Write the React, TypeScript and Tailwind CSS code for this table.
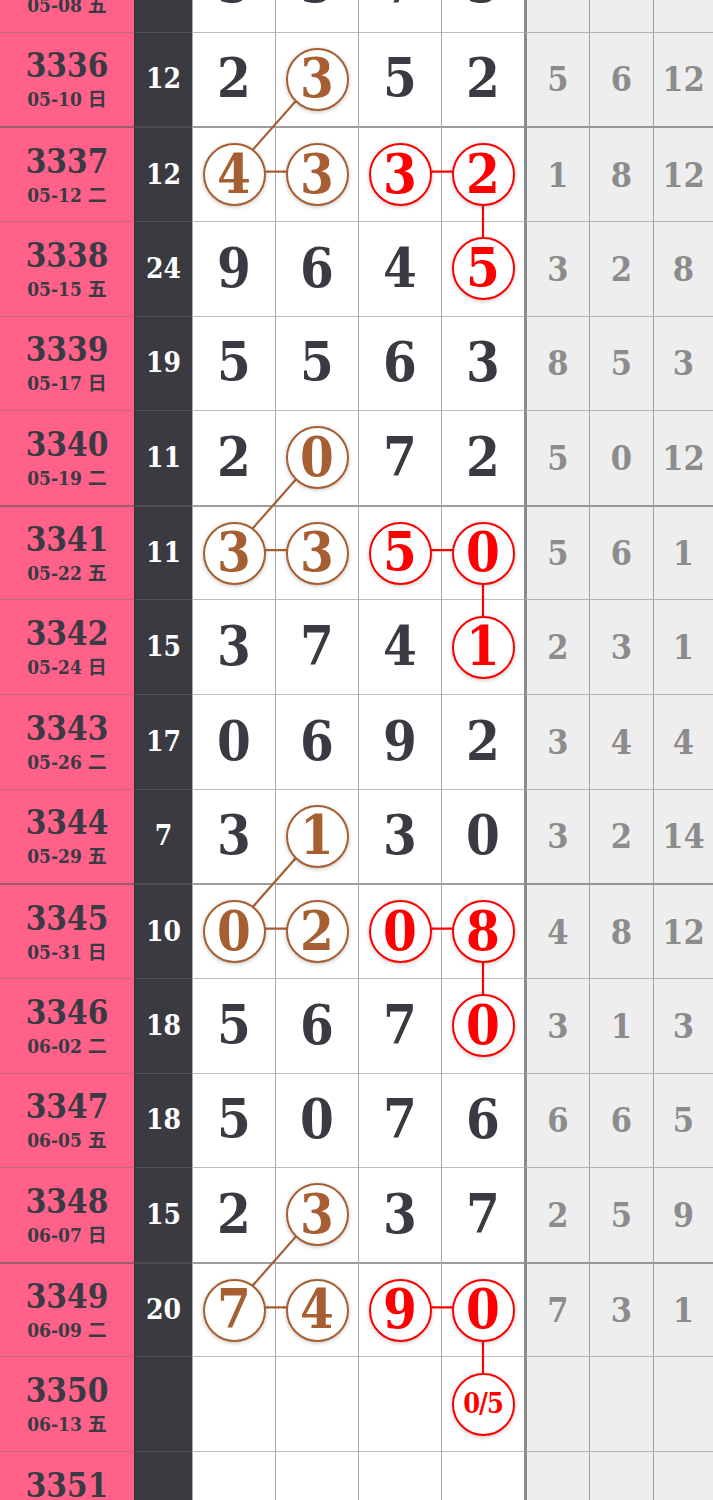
import React from "react";

type Mark = "b" | "r" | null;

interface Row {
  no: string;
  date: string;
  sum: string;
  d: string[];
  m: Mark[];
  g: string[];
}

const RH = 94.64;

const rows: Row[] = [
  { no: "3335", date: "05-08 五", sum: "", d: ["5", "5", "7", "5"], m: [null, null, null, null], g: ["", "", ""] },
  { no: "3336", date: "05-10 日", sum: "12", d: ["2", "3", "5", "2"], m: [null, "b", null, null], g: ["5", "6", "12"] },
  { no: "3337", date: "05-12 二", sum: "12", d: ["4", "3", "3", "2"], m: ["b", "b", "r", "r"], g: ["1", "8", "12"] },
  { no: "3338", date: "05-15 五", sum: "24", d: ["9", "6", "4", "5"], m: [null, null, null, "r"], g: ["3", "2", "8"] },
  { no: "3339", date: "05-17 日", sum: "19", d: ["5", "5", "6", "3"], m: [null, null, null, null], g: ["8", "5", "3"] },
  { no: "3340", date: "05-19 二", sum: "11", d: ["2", "0", "7", "2"], m: [null, "b", null, null], g: ["5", "0", "12"] },
  { no: "3341", date: "05-22 五", sum: "11", d: ["3", "3", "5", "0"], m: ["b", "b", "r", "r"], g: ["5", "6", "1"] },
  { no: "3342", date: "05-24 日", sum: "15", d: ["3", "7", "4", "1"], m: [null, null, null, "r"], g: ["2", "3", "1"] },
  { no: "3343", date: "05-26 二", sum: "17", d: ["0", "6", "9", "2"], m: [null, null, null, null], g: ["3", "4", "4"] },
  { no: "3344", date: "05-29 五", sum: "7", d: ["3", "1", "3", "0"], m: [null, "b", null, null], g: ["3", "2", "14"] },
  { no: "3345", date: "05-31 日", sum: "10", d: ["0", "2", "0", "8"], m: ["b", "b", "r", "r"], g: ["4", "8", "12"] },
  { no: "3346", date: "06-02 二", sum: "18", d: ["5", "6", "7", "0"], m: [null, null, null, "r"], g: ["3", "1", "3"] },
  { no: "3347", date: "06-05 五", sum: "18", d: ["5", "0", "7", "6"], m: [null, null, null, null], g: ["6", "6", "5"] },
  { no: "3348", date: "06-07 日", sum: "15", d: ["2", "3", "3", "7"], m: [null, "b", null, null], g: ["2", "5", "9"] },
  { no: "3349", date: "06-09 二", sum: "20", d: ["7", "4", "9", "0"], m: ["b", "b", "r", "r"], g: ["7", "3", "1"] },
  { no: "3350", date: "06-13 五", sum: "", d: ["", "", "", "0/5"], m: [null, null, null, "r"], g: ["", "", ""] },
  { no: "3351", date: "06-16 日", sum: "", d: ["", "", "", ""], m: [null, null, null, null], g: ["", "", ""] },
];

const serif = { fontFamily: '"DejaVu Serif Condensed", "DejaVu Serif", "Noto Sans CJK SC", serif' };

// centres of the four number columns, used by the connector lines
const colX = [233.5, 317, 400, 483];

function Ball({ v, kind }: { v: string; kind: "b" | "r" }) {
  const color =
    kind === "b" ? "border-[#a65f33] text-[#a65f33]" : "border-[#ff0000] text-[#ff0000]";
  const size = v.length > 1 ? "text-[27px] tracking-[-1px]" : "text-[54px]";
  return (
    <div
      className={`relative z-10 flex h-[63px] w-[63px] items-center justify-center rounded-full border-[2.5px] bg-white font-bold leading-none shadow-[0_1px_4px_rgba(0,0,0,0.25)] ${color} ${size}`}
    >
      <span className="-mt-[2px]">{v}</span>
    </div>
  );
}

function TableRow({ r, i }: { r: Row; i: number }) {
  const thick = (i - 2) % 4 === 0;
  const bt = thick ? "border-t-2 border-t-[rgba(90,90,90,0.6)]" : "border-t border-t-[rgba(110,110,110,0.45)]";
  return (
    <div className="flex h-[94.64px]" style={serif}>
      <div className={`flex w-[134px] flex-col items-center justify-center bg-[#ff6189] text-[#3a3a44] ${bt}`}>
        <div className="text-[33px] font-bold leading-none">{r.no}</div>
        <div className="mt-[8px] text-[19px] font-bold leading-none">{r.date}</div>
      </div>
      <div className={`flex w-[58px] items-center justify-center border-l border-l-[#2e2e33] bg-[#3a3a41] text-[28px] font-bold text-white ${bt}`}>
        {r.sum}
      </div>
      {r.d.map((v, j) => (
        <div
          key={j}
          className={`flex w-[83px] items-center justify-center border-l-[1.5px] border-l-[#aaaaaa] bg-white text-[54px] font-bold leading-none text-[#3a3a42] ${bt}`}
        >
          {r.m[j] && v ? <Ball v={v} kind={r.m[j] as "b" | "r"} /> : <span className="-mt-[2px]">{v}</span>}
        </div>
      ))}
      {r.g.map((v, j) => (
        <div
          key={j}
          className={`flex items-center justify-center bg-[#eeeeee] text-[34px] font-bold leading-none text-[#8c8c8c] ${
            j === 0 ? "w-[65px] border-l-[3px] border-l-[#8a8a8a]" : j === 1 ? "w-[64px] border-l-[1.5px] border-l-[#a0a0a0]" : "w-[60px] border-l-[1.5px] border-l-[#a0a0a0]"
          } ${bt}`}
        >
          {v}
        </div>
      ))}
    </div>
  );
}

export default function App() {
  const cy = (i: number) => i * RH + RH / 2 - 2;
  const lines: { x1: number; y1: number; x2: number; y2: number; c: string }[] = [];
  rows.forEach((r, i) => {
    if (r.m[0] === "b") {
      lines.push({ x1: colX[0], y1: cy(i), x2: colX[1], y2: cy(i), c: "#a65f33" });
      lines.push({ x1: colX[0], y1: cy(i), x2: colX[1], y2: cy(i - 1), c: "#a65f33" });
    }
    if (r.m[2] === "r") {
      lines.push({ x1: colX[2], y1: cy(i), x2: colX[3], y2: cy(i), c: "#ff0000" });
      lines.push({ x1: colX[3], y1: cy(i), x2: colX[3], y2: cy(i + 1), c: "#ff0000" });
    }
  });

  return (
    <div className="h-[1500px] w-[713px] overflow-hidden bg-white">
      <div className="relative mt-[-63px]">
        {rows.map((r, i) => (
          <TableRow key={r.no} r={r} i={i} />
        ))}
        <svg
          className="pointer-events-none absolute left-0 top-0 z-[5]"
          width={713}
          height={rows.length * RH}
        >
          {lines.map((l, k) => (
            <line key={k} x1={l.x1} y1={l.y1} x2={l.x2} y2={l.y2} stroke={l.c} strokeWidth={2.2} />
          ))}
        </svg>
      </div>
    </div>
  );
}
